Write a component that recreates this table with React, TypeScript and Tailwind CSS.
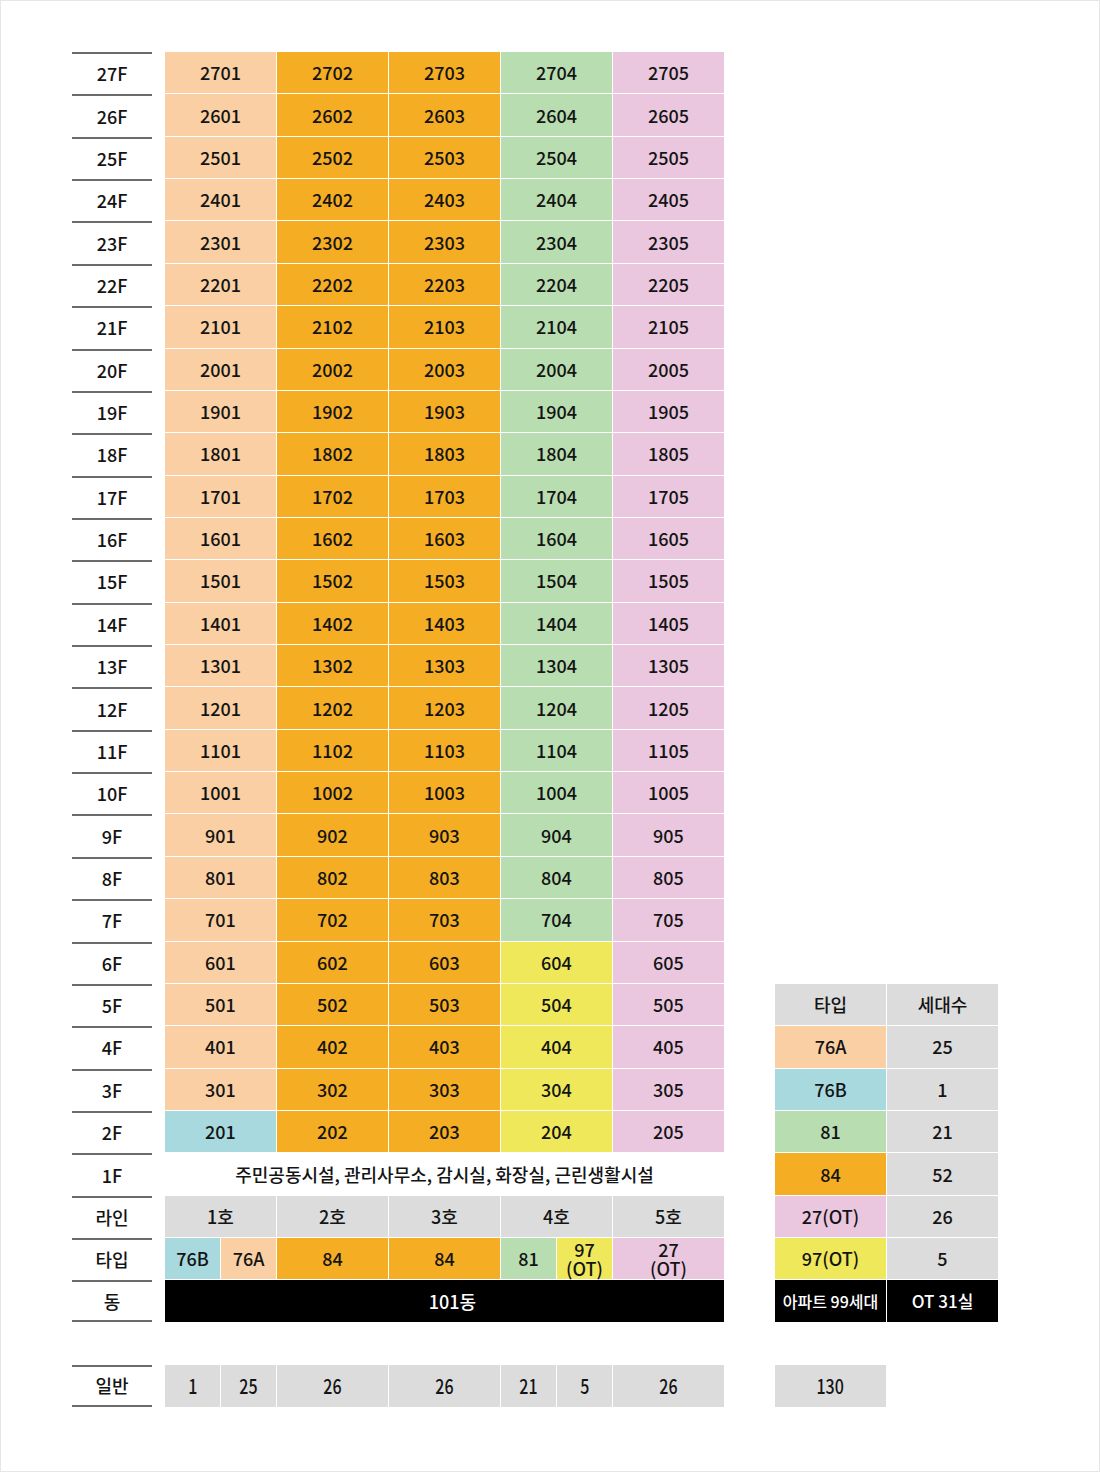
import React from "react"

const peach = "bg-[#f9cfa3]"
const orange = "bg-[#f5ad23]"
const green = "bg-[#b8ddb0]"
const pink = "bg-[#eac7df]"
const yellow = "bg-[#efe85b]"
const blue = "bg-[#a7d9de]"
const gray = "bg-[#dcdcdc]"

function Label({ text, last }: { text?: string; last?: boolean }) {
    return (
        <div className="pr-[12px] h-full">
            <div className={`h-full flex items-center justify-center border-t-2 border-[#6b6b6b] ${last ? "border-b-2" : ""}`}>
                {text}
            </div>
        </div>
    )
}

function Cell({ color, children, className = "" }: { color: string; children?: React.ReactNode; className?: string }) {
    return <div className={`${color} flex items-center justify-center ${className}`}>{children}</div>
}

function Narrow({ children }: { children: React.ReactNode }) {
    return <span className="inline-block scale-x-80 text-[20px]">{children}</span>
}

const legend: Record<string, [string, string, string]> = {
    "5F": [gray, "타입", "세대수"],
    "4F": [peach, "76A", "25"],
    "3F": [blue, "76B", "1"],
    "2F": [green, "81", "21"],
}

export default function App() {
    const floors = Array.from({ length: 26 }, (_, i) => 27 - i)

    return (
        <div
            className="w-[1100px] h-[1472px] bg-white border border-[#e6e6e6] pt-[51px] pl-[71px] text-[#141414] text-[18px] font-medium"
            style={{ fontFamily: '"Noto Sans CJK KR", "Noto Sans", sans-serif' }}
        >
            <div className="grid grid-cols-[92px_repeat(5,111px)_49px_111px_111px] auto-rows-[41.37px] gap-x-px gap-y-px">
                {floors.map((f) => {
                    const lg = legend[`${f}F`]
                    return (
                        <React.Fragment key={f}>
                            <Label text={`${f}F`} />
                            <Cell color={f === 2 ? blue : peach}>{f}01</Cell>
                            <Cell color={orange}>{f}02</Cell>
                            <Cell color={orange}>{f}03</Cell>
                            <Cell color={f >= 7 ? green : yellow}>{f}04</Cell>
                            <Cell color={pink}>{f}05</Cell>
                            <div />
                            {lg ? (
                                <>
                                    <Cell color={lg[0]}>{lg[1]}</Cell>
                                    <Cell color={gray}>{lg[2]}</Cell>
                                </>
                            ) : (
                                <>
                                    <div />
                                    <div />
                                </>
                            )}
                        </React.Fragment>
                    )
                })}

                {/* 1F */}
                <Label text="1F" />
                <div className="col-span-5 flex items-center justify-center text-[18px]">
                    주민공동시설, 관리사무소, 감시실, 화장실, 근린생활시설
                </div>
                <div />
                <Cell color={orange}>84</Cell>
                <Cell color={gray}>52</Cell>

                {/* 라인 */}
                <Label text="라인" />
                <Cell color={gray}>1호</Cell>
                <Cell color={gray}>2호</Cell>
                <Cell color={gray}>3호</Cell>
                <Cell color={gray}>4호</Cell>
                <Cell color={gray}>5호</Cell>
                <div />
                <Cell color={pink}>27(OT)</Cell>
                <Cell color={gray}>26</Cell>

                {/* 타입 */}
                <Label text="타입" />
                <div className="grid grid-cols-2 gap-x-px">
                    <Cell color={blue}>76B</Cell>
                    <Cell color={peach}>76A</Cell>
                </div>
                <Cell color={orange}>84</Cell>
                <Cell color={orange}>84</Cell>
                <div className="grid grid-cols-2 gap-x-px">
                    <Cell color={green}>81</Cell>
                    <Cell color={yellow} className="flex-col leading-[19px] pt-[1px]">
                        <span>97</span>
                        <span>(OT)</span>
                    </Cell>
                </div>
                <Cell color={pink} className="flex-col leading-[19px] pt-[1px]">
                    <span>27</span>
                    <span>(OT)</span>
                </Cell>
                <div />
                <Cell color={yellow}>97(OT)</Cell>
                <Cell color={gray}>5</Cell>

                {/* 동 */}
                <Label text="동" last />
                <Cell color="bg-black" className="col-span-5 text-white pl-4">101동</Cell>
                <div />
                <Cell color="bg-black" className="text-white text-[16px]">아파트 99세대</Cell>
                <Cell color="bg-black" className="text-white text-[17px]">OT 31실</Cell>

                {/* spacer row */}
                <div className="col-span-9" />

                {/* 일반 */}
                <Label text="일반" last />
                <div className="grid grid-cols-2 gap-x-px">
                    <Cell color={gray}><Narrow>1</Narrow></Cell>
                    <Cell color={gray}><Narrow>25</Narrow></Cell>
                </div>
                <Cell color={gray}><Narrow>26</Narrow></Cell>
                <Cell color={gray}><Narrow>26</Narrow></Cell>
                <div className="grid grid-cols-2 gap-x-px">
                    <Cell color={gray}><Narrow>21</Narrow></Cell>
                    <Cell color={gray}><Narrow>5</Narrow></Cell>
                </div>
                <Cell color={gray}><Narrow>26</Narrow></Cell>
                <div />
                <Cell color={gray}><Narrow>130</Narrow></Cell>
                <div />
            </div>
        </div>
    )
}
